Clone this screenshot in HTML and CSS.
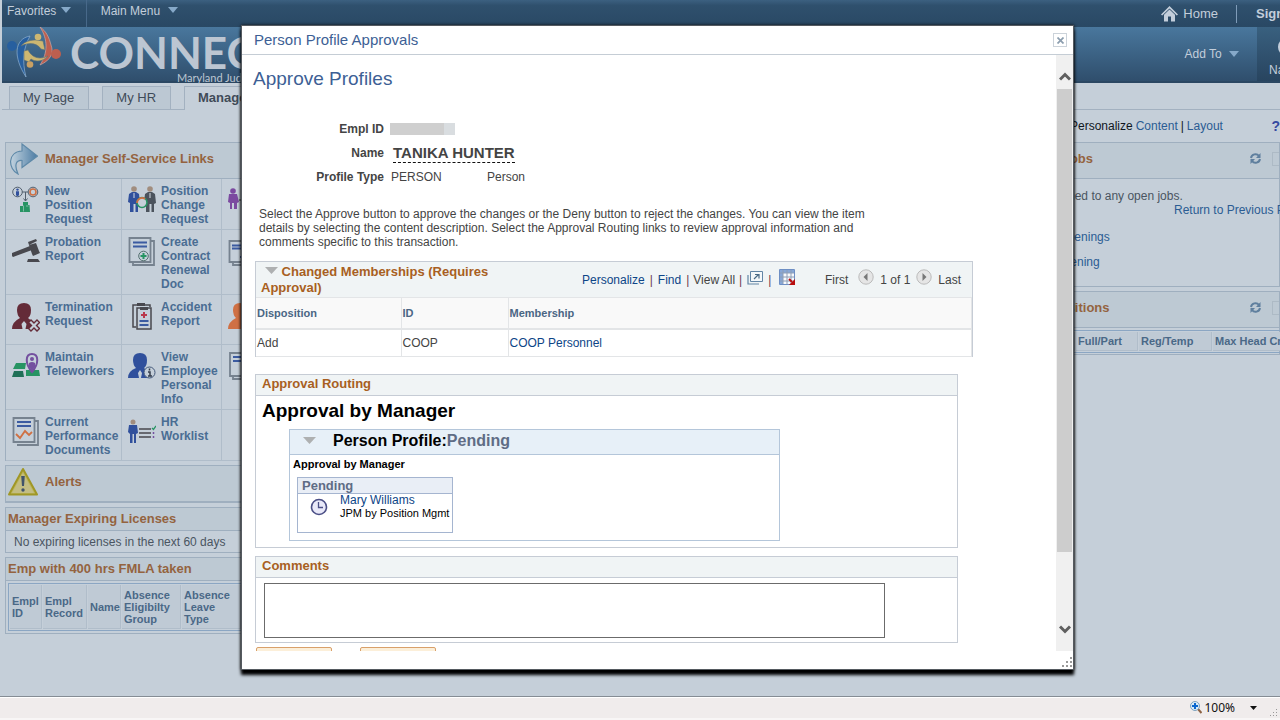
FILE: index.html
```html
<!DOCTYPE html>
<html lang="en">
<head>
<meta charset="utf-8">
<title>Person Profile Approvals</title>
<link rel="stylesheet" href="styles.css">
</head>
<body>
<div class="page">
  <header class="topbar">
    <a class="menu fav" href="#">Favorites <svg width="10" height="6"><path d="M0 0h10L5 6z" fill="#86a9c9"/></svg></a>
    <a class="menu" href="#">Main Menu <svg class="far" width="10" height="6"><path d="M0 0h10L5 6z" fill="#86a9c9"/></svg></a>
    <a class="home" href="#"><svg width="17" height="16" viewBox="0 0 17 16"><path d="M8.500 0 17 8.500l-1.200 1L8.500 2.600 1.200 9.500 0 8.500z" fill="#c3cedb"/><path d="M8.500 3.500 14 8.700V15.500H10V10.500H7V15.500H3V8.700z" fill="#c3cedb"/></svg>Home</a>
    <a class="signout" href="#">Sign out</a>
  </header>
  <div class="banner">
    <svg class="logo" width="56" height="52" viewBox="0 0 56 52">
      <path d="M24 9C8 12 7 30 20 50 16 34 17 22 24 9z" fill="#275f9f" stroke="#8fb0d0" stroke-width=".7"/>
      <path d="M34 0c8 12 8 26 0 38 11-5 14-12 11-20C43 10 40 4 34 0z" fill="#bd5f4f" stroke="#c9a8a5" stroke-width=".7"/>
      <path d="M15 19c4-5 10-6 15-6l7 1 2 9-4-1c-4-6-12-7-20-3z" fill="#cdb771" stroke="#5d6f77" stroke-width=".6"/>
      <path d="M42 29c-5 6-13 6-17 3l-2 3-5-2v-9l4-1c4 8 12 10 20 6z" fill="#cdb771" stroke="#5d6f77" stroke-width=".6"/>
      <circle cx="6" cy="19" r="5" fill="#275f9f"/><circle cx="50" cy="27" r="5" fill="#bd5f4f"/>
      <circle cx="32" cy="10" r="3.300" fill="#cdb771"/><circle cx="24" cy="37.500" r="3.300" fill="#c9a063"/>
    </svg>
    <div class="brand"><div class="brand-name">CONNECT</div><div class="brand-sub">Maryland Judiciary</div></div>
    <a class="addto" href="#">Add To <svg width="10" height="6"><path d="M0 0h10L5 6z" fill="#86a9c9"/></svg></a>
    <a class="navbar" href="#"><svg width="20" height="20" viewBox="0 0 20 20"><circle cx="10" cy="10" r="8" fill="none" stroke="#c3cedb" stroke-width="2"/><path d="M14 6l-3 6-5 2 3-6z" fill="#c3cedb"/></svg><span>NavBar</span></a>
  </div>
  <nav class="tabs">
    <a href="#">My Page</a><a href="#">My HR</a><a class="active" href="#">Manager</a>
  </nav>
  <main class="columns">
    <div class="left">
      <section class="portlet">
        <h2 class="phead tall"><svg width="30" height="32" viewBox="0 0 30 32"><defs><linearGradient id="ar" x1="0" x2="1"><stop offset="0" stop-color="#c2d3df"/><stop offset="1" stop-color="#4b7ba3"/></linearGradient></defs><path d="M14 1 29.500 13 14 24.500V17.500C8 17 6 22 10 31 0 26-1 9 14 8z" fill="url(#ar)" stroke="#5e89a8" stroke-width="1.200"/></svg>Manager Self-Service Links</h2>
        <div class="links">
          <a href="#"><svg viewBox="0 0 28 30"><g fill="none" stroke="#53606e" stroke-width="1"><circle cx="5.500" cy="6" r="4.800"/><circle cx="21" cy="6" r="4.800"/><path d="M10 6h6M13.500 6v9M11.500 12.500l2 2.500 2-2.500"/></g><circle cx="21" cy="6" r="3" fill="none" stroke="#cf7044" stroke-width="1.600"/><circle cx="5.500" cy="3.600" r="1.200" fill="#30509c"/><path d="M4 5.200h3v3l-.6 2H4.600L4 8.200z" fill="#30509c"/><path d="M11 16h5v3h1v7H8v-6h3zM17.500 19H18v7h-1z" fill="#279463"/><path d="M11.500 19.500v6M14 20h2.500" stroke="#7fbaa5" fill="none"/></svg><span>New Position Request</span></a>
          <a href="#"><svg viewBox="0 0 28 30"><circle cx="6" cy="3" r="2.800" fill="#a18d7e"/><circle cx="22" cy="3" r="2.800" fill="#a18d7e"/><path d="M1 8l3-2h4l3 2 1 9-2 1v8H7.500v-8h-2v8H2V17L0 16z" fill="#30509c"/><path d="M17 8l3-2h4l3 2 1 9-2 1v8h-2.500v-8h-2v8H18V17l-2-1z" fill="#4b535d"/><path d="M6 7v5M22 7v5" stroke="#d5dce4"/><circle cx="14" cy="16.500" r="5" fill="#c5cfd9" stroke="#279463" stroke-width="1.600"/><path d="M9 17a5 5 0 0 1 8-4" fill="none" stroke="#cf7044" stroke-width="1.800"/></svg><span>Position Change Request</span></a>
          <a href="#" aria-label="Transfer"><svg viewBox="0 0 28 30"><circle cx="5" cy="5" r="2.800" fill="#7b4aa0"/><path d="M1 8h8l2 8-2 1v6H6v-6H4v6H2v-6l-2-1z" fill="#7b4aa0"/><path d="M11 14h10M14 8v16" stroke="#333" fill="none"/></svg></a>

          <a href="#"><svg viewBox="0 0 28 30"><path d="M0 16 18 9l2 4L1 20q-2-2-1-4zM16 5l8-3 1 2-8 4zM17 8l7-2 3 8-7 3zM20 17l7-3 1 2-7 3zM15 25l1-3h10l2 3z" fill="#48484e"/></svg><span>Probation Report</span></a>
          <a href="#"><svg viewBox="0 0 28 30"><path d="M5 25v3h21V4h-3" fill="none" stroke="#76828f" stroke-width="1.800"/><path d="M1.500 1h21v24h-21z" fill="#c5cfd9" stroke="#76828f" stroke-width="1.800"/><path d="M5 5.500h14M5 9.500h14" stroke="#3b5ba1" stroke-width="1.800"/><circle cx="15.500" cy="19" r="4.800" fill="#c5cfd9" stroke="#53706e"/><path d="M12.500 19h6M15.500 16v6" stroke="#279463" stroke-width="2"/></svg><span>Create Contract Renewal Doc</span></a>
          <a href="#" aria-label="Contract"><svg viewBox="0 0 28 30"><path d="M1.500 4h21v21h-21zM5 25v3h21" fill="none" stroke="#76828f" stroke-width="1.800"/><path d="M4 8.500h14M4 11.500h14M12 20h6" stroke="#3b5ba1" stroke-width="1.800"/></svg></a>

          <a href="#"><svg viewBox="0 0 28 30"><path d="M5 8Q5 1 12 1t7 7q0 6-3 8 3 3 6 4l2 7H0q0-7 8-11-3-3-3-8z" fill="#642b38"/><path d="M12 19l2.500 3-1 5h-3l-1-5z" fill="#c5cfd9"/><path d="M19 18l3 3 3-3 2.500 2.500-3 3 3 3L25 29l-3-3-3 3-2.500-2.500 3-3-3-3z" fill="#c5cfd9" stroke="#642b38" stroke-width="1.400"/></svg><span>Termination Request</span></a>
          <a href="#"><svg viewBox="0 0 28 30"><path d="M8 25H5V3h17v2" fill="none" stroke="#48484e" stroke-width="1.500"/><path d="M9 6h14v21H9z" fill="#c5cfd9" stroke="#48484e" stroke-width="1.500"/><path d="M9 1h8v3H9zM12 5h8v3h-8z" fill="#48484e"/><path d="M16 10v6M13 13h6" stroke="#b9384b" stroke-width="2"/><path d="M11.500 19h9M11.500 23h9" stroke="#3b5ba1" stroke-width="2"/></svg><span>Accident Report</span></a>
          <a href="#" aria-label="Employee"><svg viewBox="0 0 28 30"><path d="M5 8Q5 1 12 1t7 7q0 6-3 8 3 3 6 4l2 7H0q0-7 8-11-3-3-3-8z" fill="#cf7044"/></svg></a>

          <a href="#"><svg viewBox="0 0 28 30"><path d="M4 11h10l-1 6H1zM14 18h13l1 6H14z" fill="#279463"/><path d="M2 19h9l1 6H0z" fill="#1f7057"/><path d="M20 20c-7-8-7-18 0-18s7 10 0 18z" fill="#c5cfd9" stroke="#74509f" stroke-width="2"/><circle cx="20" cy="7" r="2" fill="#74509f"/><path d="M17 15v-4q3-2 6 0v4l-3 4z" fill="#74509f"/></svg><span>Maintain Teleworkers</span></a>
          <a href="#"><svg viewBox="0 0 28 30"><path d="M5 8Q5 1 12 1t7 7q0 6-3 8 3 3 6 4l2 6H0q0-7 8-10-3-3-3-8z" fill="#30509c"/><path d="M12 18l2 3-1 5h-2l-1-5z" fill="#c5cfd9"/><circle cx="21.500" cy="20.500" r="5.500" fill="#c5cfd9" stroke="#435879"/><path d="M21.500 16.500v2M20 20h2v4M20 24h4" stroke="#333d4b" stroke-width="1.500" fill="none"/></svg><span>View Employee Personal Info</span></a>
          <a href="#" aria-label="Review"><svg viewBox="0 0 28 30"><path d="M2 1h21v23H2zM5 24v3h21" fill="none" stroke="#76828f" stroke-width="1.800"/><path d="M5 5h14M5 9h14" stroke="#3b5ba1" stroke-width="1.800"/></svg></a>

          <a href="#"><svg viewBox="0 0 28 30"><path d="M5 28h21V4h-3" fill="none" stroke="#76828f" stroke-width="1.800"/><path d="M1.500 1h21v24h-21z" fill="#c5cfd9" stroke="#76828f" stroke-width="1.800"/><path d="M5 5h14M5 9h14" stroke="#3b5ba1" stroke-width="1.800"/><path d="M4 17l4 4 5-7 4 4 3-3" fill="none" stroke="#cf7044" stroke-width="1.800"/></svg><span>Current Performance Documents</span></a>
          <a href="#"><svg viewBox="0 0 28 30"><circle cx="5" cy="5" r="2.500" fill="#a18d7e"/><path d="M1 8h8l1 8-2 1v9H6v-9H4.500v9H2v-9l-2-2z" fill="#30509c"/><path d="M11 12h12M11 16h12M11 20h12" stroke="#48484e" stroke-width="1.500"/><path d="M24 11l1.500 1.500L28 9" fill="none" stroke="#279463" stroke-width="1.300"/><path d="M25.500 15v2M25.500 19v2" stroke="#74509f" stroke-width="1.500"/></svg><span>HR Worklist</span></a>
          <div></div>
        </div>
      </section>
      <section class="portlet">
        <h2 class="phead tall"><svg width="30" height="30" viewBox="0 0 30 30"><path d="M15 2 29 27.500H1z" fill="#bdb65c" stroke="#a09726" stroke-width="2" stroke-linejoin="round"/><path d="M15 6 26 26H4z" fill="#c3bd83"/><path d="M13.200 9h3.600l-.8 10h-2z" fill="#40536a"/><circle cx="15" cy="23" r="1.700" fill="#40536a"/></svg>Alerts</h2>
      </section>
      <section class="portlet">
        <h2 class="phead">Manager Expiring Licenses</h2>
        <p class="note">No expiring licenses in the next 60 days</p>
      </section>
      <section class="portlet">
        <h2 class="phead">Emp with 400 hrs FMLA taken</h2>
        <table class="fmla"><tr><th>Empl ID</th><th>Empl Record</th><th>Name</th><th>Absence Eligibilty Group</th><th>Absence Leave Type</th><th></th></tr></table>
      </section>
    </div>
    <div class="right">
      <p class="personalize">Personalize <a href="#">Content</a> | <a href="#">Layout</a><a class="help" href="#">?</a></p>
      <section class="portlet">
        <h2 class="phead tall">My Jobs<svg class="refresh" width="11" height="11" viewBox="0 0 11 11"><path d="M1 5a4.500 4.500 0 0 1 8-2M10 6a4.500 4.500 0 0 1-8 2" fill="none" stroke="#5f7f9e" stroke-width="2"/><path d="M10.500 0v5H6zM.5 11V6H5z" fill="#5f7f9e"/></svg><i class="opt"></i></h2>
        <div class="jobbody">
          <p>Not assigned to any open jobs.</p>
          <a class="back" href="#">Return to Previous Page</a>
          <a class="l1" href="#">Search Openings</a>
          <a class="l2" href="#">Create Opening</a>
        </div>
      </section>
      <section class="portlet">
        <h2 class="phead tall positions">Positions<svg class="refresh" width="11" height="11" viewBox="0 0 11 11"><path d="M1 5a4.500 4.500 0 0 1 8-2M10 6a4.500 4.500 0 0 1-8 2" fill="none" stroke="#5f7f9e" stroke-width="2"/><path d="M10.500 0v5H6zM.5 11V6H5z" fill="#5f7f9e"/></svg><i class="opt"></i></h2>
        <table class="pos"><tr><th>Title</th><th>Full/Part</th><th>Reg/Temp</th><th>Max Head Cnt</th></tr></table>
      </section>
    </div>
  </main>
  <footer class="status">
    <svg width="12" height="13" viewBox="0 0 12 13"><path d="M8 8l3.500 4" stroke="#8d6244" stroke-width="2"/><circle cx="5" cy="5" r="4.500" fill="#d8ebf8" stroke="#7da1bd"/><path d="M5 2v6M2 5h6" stroke="#0b67cf" stroke-width="2"/></svg>
    <span>100%</span>
    <svg class="caret" width="7" height="4"><path d="M0 0h7L3.500 4z" fill="#111"/></svg>
    <svg class="grip" width="8" height="8" viewBox="0 0 8 8"><path d="M6 0h1v1H6zM3 3h1v1H3zM6 3h1v1H6zM0 6h1v1H0zM3 6h1v1H3zM6 6h1v1H6z" fill="#999"/></svg>
  </footer>
</div>

<div class="dialog" role="dialog" aria-labelledby="dlg">
  <header class="dtitle"><span id="dlg">Person Profile Approvals</span><button class="close" aria-label="Close"><svg width="7" height="7" viewBox="0 0 7 7"><path d="M.5.5l6 6M6.500.5l-6 6" stroke="#8b9dae" stroke-width="1.700"/></svg></button></header>
  <div class="dmain">
    <div class="dbody">
      <h1>Approve Profiles</h1>
      <dl class="facts">
        <dt>Empl ID</dt><dd><span class="mask"></span></dd>
        <dt>Name</dt><dd><span class="person">TANIKA HUNTER</span></dd>
        <dt>Profile Type</dt><dd class="ptype"><span>PERSON</span><span>Person</span></dd>
      </dl>
      <p class="help-text">Select the Approve button to approve the changes or the Deny button to reject the changes. You can view the item details by selecting the content description. Select the Approval Routing links to review approval information and comments specific to this transaction.</p>
      <section class="changed">
        <div class="chead">
          <h2><svg width="13" height="7"><path d="M0 0h13L6.500 7z" fill="#aeb0b1"/></svg> Changed Memberships (Requires Approval)</h2>
          <div class="tools">
            <a href="#">Personalize</a><b>|</b><a href="#">Find</a><b>|</b><span>View All</span><b>|</b>
            <svg width="16" height="14" viewBox="0 0 16 14"><path d="M1 4v9h11" fill="none" stroke="#6285a5" stroke-width="1.200"/><path d="M3.500.5h12v10h-12z" fill="#f4f8fa" stroke="#6285a5"/><path d="M7 8l4.500-4.500M8 3.500h4v4" fill="none" stroke="#4a6b86" stroke-width="1.200"/></svg>
            <b>|</b>
            <svg class="gridicon" width="17" height="17" viewBox="0 0 17 17"><path d="M.5.5h15v15H.5z" fill="#f7f9fc" stroke="#6e8fc4"/><path d="M1 1h14v3H1zM1 4h3v11H1z" fill="#87a7d7"/><path d="M4 1v14M8 1v14M12 1v14M1 4h14M1 8h14M1 12h14" stroke="#8e9eb5"/><path d="M10 10l3 3" stroke="#b80d0d" stroke-width="2"/><path d="M16 10v6h-6z" fill="#b80d0d"/></svg>
          </div>
          <div class="pager">
            <span class="first">First</span>
            <svg width="16" height="16" viewBox="0 0 16 16"><circle cx="8" cy="8" r="7.200" fill="#e5e5e5" stroke="#bbb"/><path d="M9.500 4v8L5.500 8z" fill="#777"/></svg>
            <span>1 of 1</span>
            <svg width="16" height="16" viewBox="0 0 16 16"><circle cx="8" cy="8" r="7.200" fill="#e5e5e5" stroke="#bbb"/><path d="M6.500 4v8l4-4z" fill="#777"/></svg>
            <span>Last</span>
          </div>
        </div>
        <table>
          <tr><th class="c1">Disposition</th><th class="c2">ID</th><th>Membership</th></tr>
          <tr><td>Add</td><td>COOP</td><td><a href="#">COOP Personnel</a></td></tr>
        </table>
      </section>
      <section class="box routing">
        <h2 class="bhead">Approval Routing</h2>
        <h3>Approval by Manager</h3>
        <div class="stage">
          <h4><svg width="13" height="7"><path d="M0 0h13L6.500 7z" fill="#aeb0b1"/></svg><span>Person Profile:<em>Pending</em></span></h4>
          <h5>Approval by Manager</h5>
          <div class="step">
            <h6>Pending</h6>
            <div class="who">
              <svg width="18" height="18" viewBox="0 0 18 18"><circle cx="9" cy="9" r="7.500" fill="#e9e9f9" stroke="#4b4f86" stroke-width="1.600"/><path d="M8.500 4v5.500H13" fill="none" stroke="#4b4f86" stroke-width="1.300"/></svg>
              <div><a href="#">Mary Williams</a><small>JPM by Position Mgmt</small></div>
            </div>
          </div>
        </div>
      </section>
      <section class="box comments">
        <h2 class="bhead"><label for="cm">Comments</label></h2>
        <textarea id="cm"></textarea>
      </section>
      <div class="actions"><button aria-label="Approve"></button><button aria-label="Deny"></button></div>
    </div>
    <div class="scroll">
      <svg width="12" height="9" viewBox="0 0 12 9"><path d="M1 7.500 6 2.500l5 5" fill="none" stroke="#5f5f5f" stroke-width="3"/></svg>
      <i></i>
      <svg width="12" height="9" viewBox="0 0 12 9"><path d="M1 1.500 6 6.500l5-5" fill="none" stroke="#5f5f5f" stroke-width="3"/></svg>
    </div>
  </div>
  <div class="dfoot"><svg width="11" height="11" viewBox="0 0 11 11"><path d="M8 0h2v2H8zM4 4h2v2H4zM8 4h2v2H8zM0 8h2v2H0zM4 8h2v2H4zM8 8h2v2H8z" fill="#999"/></svg></div>
</div>
</body>
</html>
```
FILE: styles.css
```css
* { box-sizing: border-box; }
body, h1, h2, h3, h4, h5, h6, p, dl, dd { margin: 0; }
body { font: 12px/14px "Liberation Sans", Arial, sans-serif; color: #4a5561; overflow: hidden; background: #c5cfd9; }
a { text-decoration: none; color: #2b5c93; }
svg { flex: none; }
.page { display: flex; flex-direction: column; height: 100vh; overflow: hidden; }

.topbar { display: flex; align-items: center; height: 27px; margin-left: 2px; background: linear-gradient(#3c6080, #2f506d 20%, #294864); color: #c3cedb; }
.topbar a { color: #c3cedb; white-space: nowrap; }
.menu { height: 27px; padding: 4px 16px 0 14px; }
.menu svg { margin: 0 0 2px 1px; }
.menu svg.far { margin-left: 5px; }
.menu.fav { padding: 4px 15px 0 5px; border-right: 1px solid #48698a; }
.home { display: flex; align-items: center; gap: 5px; margin-left: auto; padding-right: 18px; border-right: 1px solid #7f9cb9; font-size: 13px; height: 18px; }
.signout { width: 43px; padding-left: 19px; overflow: hidden; font-weight: bold; font-size: 13px; }

.banner { display: flex; height: 56px; margin-left: 2px; border-bottom: 2px solid #2b4762; background: linear-gradient(#49779d, #2f4e6c); }
.banner a { color: #c3cedb; }
.logo { margin-left: 4px; }
.brand { width: 300px; padding-left: 8px; color: #bcc6d2; font-family: Lato, sans-serif; }
.brand-name { font-size: 44px; font-weight: bold; line-height: 46px; margin-top: 2px; height: 42px; }
.brand-sub { padding-left: 107px; font-size: 11px; line-height: 13px; white-space: nowrap; }
.addto { margin-left: auto; padding: 20px 18px 0 0; white-space: nowrap; }
.addto svg { margin: 0 0 1px 4px; }
.navbar { width: 23px; padding: 10px 0 0 12px; overflow: hidden; background: linear-gradient(#39607f, #28445f); white-space: nowrap; }
.navbar svg { display: block; margin: 0 0 6px 8px; }

.tabs { display: flex; align-items: flex-end; gap: 13px; height: 27px; margin-left: 2px; padding-left: 7px; border-bottom: 1px solid #a3b1c0; }
.tabs a { height: 23px; padding: 4px 14px 4px 13px; border: 1px solid #a3b1c0; border-bottom: 0; background: #bcc8d3; color: #3f4b58; font-size: 13px; }
.tabs .active { height: 24px; margin-bottom: -1px; background: #c5cfd9; font-weight: bold; }

.columns { display: flex; justify-content: space-between; flex: 1; min-height: 0; padding-left: 5px; }
.left { width: 300px; padding-top: 32px; }
.portlet { margin-bottom: 4px; border: 1px solid #9fafbf; }
.phead { display: flex; align-items: center; height: 23px; padding-left: 2px; background: #bdc9d3; border-bottom: 1px solid #9fafbf; color: #94633f; font-size: 13px; }
.phead.tall { height: 36px; padding-bottom: 4px; }
.phead.tall svg { margin: 0 7px 0 0; }
.links { display: grid; grid-template-columns: 116px 100px 1fr; margin-bottom: -1px; }
.links > * { display: flex; gap: 5px; padding: 5px 0 3px 6px; border-right: 1px solid #b0bdca; border-bottom: 1px solid #b0bdca; min-height: 50px; font-weight: bold; color: #4a6d93; }
.links span { width: 70px; }
.links svg { width: 28px; height: 30px; margin-top: 2px; }
.note { padding: 4px 8px 3px; line-height: 14px; }
.fmla { border: 1px solid #8ba6c3; border-collapse: separate; border-spacing: 1px; width: 290px; margin: 2px; table-layout: fixed; }
.fmla th, .pos th { padding: 0 0 0 2px; border-right: 1px solid #b0bdca; border-bottom: 1px solid #b0bdca; background: #bfcad5; color: #4a6887; text-align: left; font-size: 11px; line-height: 12px; }
.fmla th { height: 44px; }
.fmla th:nth-child(1) { width: 32px; }
.fmla th:nth-child(2) { width: 44px; }
.fmla th:nth-child(3) { width: 33px; }
.fmla th:nth-child(4), .fmla th:nth-child(5) { width: 59px; }

.right { width: 267px; overflow: hidden; }
.personalize { display: flex; gap: 3px; padding: 9px 0 9px 57px; color: #10161d; white-space: nowrap; }
.help { margin-left: auto; font-weight: bold; font-size: 14px; color: #3549a0; }
.right .phead { padding-left: 27px; }
.right .phead.positions { padding-left: 37px; }
.phead.tall .refresh { margin: 0 11px 0 auto; }
.opt { width: 7px; height: 14px; border: 1px solid #adbac5; border-right: 0; }
.jobbody { display: flex; flex-direction: column; height: 107px; padding: 10px 0 0; white-space: nowrap; }
.jobbody p { padding-left: 4px; }
.back { padding-left: 160px; }
.l1 { padding: 13px 0 11px 3px; }
.l2 { padding-left: 1px; }
.pos { width: 330px; margin: 2px 0 1px; border: 1px solid #8ba6c3; border-spacing: 1px; table-layout: fixed; }
.pos th { height: 19px; }
.pos th:nth-child(1) { width: 59px; }
.pos th:nth-child(2) { width: 62px; }
.pos th:nth-child(3) { width: 73px; }

.status { display: flex; align-items: center; justify-content: flex-end; height: 24px; flex: none; padding-right: 2px; background: #f0ecec; border-top: 1px solid #858c94; border-bottom: 2px solid #f8f6f6; box-shadow: inset 0 1px #fff; color: #111; font-family: "Noto Sans", sans-serif; }
.status span { margin: 0 15px 0 2px; }
.grip { margin: 10px 0 0 13px; }

.dialog { position: absolute; top: 25px; left: 241px; right: 206px; bottom: 50px; display: flex; flex-direction: column; border: 1px solid #555a60; background: #fff; box-shadow: 0 5px 3px #000, 0 0 3px #111; color: #444; }
.dtitle { display: flex; justify-content: space-between; align-items: center; height: 29px; padding: 0 6px 0 12px; border-bottom: 1px solid #c5cdd5; color: #3d5f95; font-size: 15px; }
.close { width: 14px; height: 14px; padding: 0; border: 1px solid #ccd3da; background: #fff; line-height: 0; }
.dmain { display: flex; flex: 1; min-height: 0; }
.dbody { flex: 1; overflow: hidden; padding: 13px 0 0 13px; }
.dbody a { color: #0d4587; }
h1 { margin-left: -2px; font-size: 19px; line-height: 22px; font-weight: normal; color: #3d5f95; }
.facts { display: grid; grid-template-columns: 129px 1fr; column-gap: 7px; grid-auto-rows: 24px; align-items: center; padding-top: 27px; }
.facts dt { text-align: right; font-weight: bold; }
.mask { display: block; width: 65px; height: 12px; background: linear-gradient(90deg, #cfcfcf 83%, #d9dde0 83%); margin-left: -1px; }
.person { margin-left: 2px; font-size: 15px; line-height: 19px; font-weight: bold; border-bottom: 1px dashed #111; display: inline-block; }
.ptype span { display: inline-block; width: 96px; }
.help-text { width: 620px; margin: 18px 0 12px 4px; }
.changed { width: 718px; border: 1px solid #c6ccd5; border-bottom: 0; }
.chead { display: flex; height: 35px; align-items: center; background: #f0f4f5; }
.chead h2 { width: 290px; padding-left: 5px; font-size: 13px; line-height: 16px; color: #a85f22; }
.chead h2 svg { margin: 0 0 2px 4px; }
.tools { display: flex; align-items: center; gap: 5px; margin: 1px 0 0 36px; }
.tools b { font-weight: normal; color: #6d3b50; }
.tools svg { margin-top: -5px; }
.tools span { margin: 0 -1px; }
.tools .gridicon { margin-left: 3px; }
.pager { display: flex; align-items: center; gap: 6px; margin: 1px 0 0 auto; padding-right: 11px; }
.pager svg { margin-top: -6px; }
.pager .first { margin-right: 4px; }
.changed table { width: 100%; border-collapse: collapse; table-layout: fixed; }
.changed th, .changed td { padding: 0 0 0 1px; border: solid #e3e5e7; border-width: 1px 1px 1px 0; text-align: left; }
.changed th { height: 31px; border-bottom-width: 2px; background: #f9f9f9; color: #4a6684; font-size: 11px; }
.changed td { height: 28px; }
.c1 { width: 145px; }
.c2 { width: 107px; }
.box { width: 703px; border: 1px solid #c6ccd5; }
.bhead { height: 21px; padding: 1px 6px; border-bottom: 1px solid #c6ccd5; background: #f0f4f5; color: #a85f22; font-size: 13px; line-height: 15px; }
.routing { height: 174px; margin: 17px 0 8px; }
h3 { padding: 4px 6px; font-size: 19px; line-height: 22px; color: #000; }
.stage { width: 491px; height: 112px; margin: 3px 0 0 33px; border: 1px solid #b4c6da; color: #000; }
h4 { display: flex; align-items: center; gap: 17px; height: 25px; padding: 0 0 3px 13px; border-bottom: 1px solid #b4c6da; background: #e7f0f8; font-size: 16px; }
h4 em { font-style: normal; color: #5f6c85; }
h5 { padding: 2px 3px; font-size: 11px; line-height: 15px; }
.step { width: 156px; height: 56px; margin: 3px 0 0 7px; border: 1px solid #a5b5d0; }
h6 { height: 16px; padding-left: 4px; border-bottom: 1px solid #a5b5d0; background: #e9eef6; color: #5f6c85; font-size: 13px; line-height: 16px; }
.who { display: flex; gap: 12px; padding-left: 12px; line-height: 13px; white-space: nowrap; }
.who svg { margin-top: 4px; }
.who a, .who small { display: block; }
.who small { font-size: 11px; }
.comments { height: 87px; }
textarea { display: block; width: 621px; height: 55px; margin: 5px 8px; border: 1px solid #6b6b6b; resize: none; }
.actions { display: flex; gap: 28px; padding: 4px 0 0 1px; }
.actions button { width: 76px; height: 22px; border: 1px solid #d9a06a; border-radius: 2px; background: #fcefd9; }
.scroll { display: flex; flex-direction: column; align-items: center; width: 17px; padding: 17px 0; background: #f0f0f0; }
.scroll i { width: 15px; height: 463px; margin: 8px 0 auto; background: #cdcdcd; }
.dfoot { display: flex; justify-content: flex-end; align-items: flex-end; height: 18px; padding: 0 0 1px; }
```
